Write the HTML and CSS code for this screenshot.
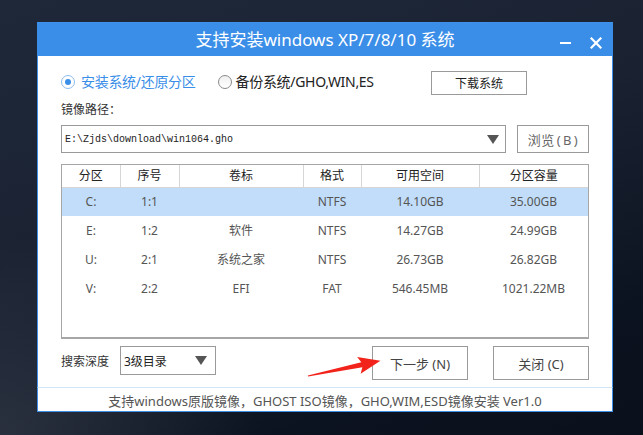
FILE: index.html
```html
<!DOCTYPE html>
<html lang="zh-CN">
<head>
<meta charset="utf-8">
<link rel="stylesheet" href="styles.css">
</head>
<body>
<div class="desktop">
  <div class="window">
    <div class="titlebar">
      <div class="title">支持安装windows XP/7/8/10 系统</div>
      <div class="controls">
        <span class="min"></span>
        <svg class="close" width="12" height="12" viewBox="0 0 12 12"><path d="M1.5 1.5 L10.5 10.5 M10.5 1.5 L1.5 10.5" stroke="#fff" stroke-width="2.2" stroke-linecap="square"/></svg>
      </div>
    </div>
    <div class="content">
      <div class="radio-row">
        <label class="radio checked"><span class="dot"></span><span class="rtext">安装系统/还原分区</span></label>
        <label class="radio"><span class="dot"></span><span class="rtext">备份系统/GHO,WIN,ES</span></label>
        <button class="btn dl">下载系统</button>
      </div>
      <div class="label">镜像路径：</div>
      <div class="path-row">
        <div class="path-input"><span class="path">E:\Zjds\download\win1064.gho</span><span class="tri"></span></div>
        <button class="btn browse">浏览 ( B )</button>
      </div>
      <div class="table-box">
        <table class="parts">
          <colgroup>
            <col class="c1"><col class="c2"><col class="c3"><col class="c4"><col class="c5"><col>
          </colgroup>
          <thead>
            <tr><th>分区</th><th>序号</th><th>卷标</th><th>格式</th><th>可用空间</th><th>分区容量</th></tr>
          </thead>
          <tbody>
            <tr class="sel"><td>C:</td><td>1:1</td><td></td><td>NTFS</td><td>14.10GB</td><td>35.00GB</td></tr>
            <tr><td>E:</td><td>1:2</td><td>软件</td><td>NTFS</td><td>14.27GB</td><td>24.99GB</td></tr>
            <tr><td>U:</td><td>2:1</td><td>系统之家</td><td>NTFS</td><td>26.73GB</td><td>26.82GB</td></tr>
            <tr><td>V:</td><td>2:2</td><td>EFI</td><td>FAT</td><td>546.45MB</td><td>1021.22MB</td></tr>
          </tbody>
        </table>
      </div>
      <div class="bottom-row">
        <span class="depth-label">搜索深度</span>
        <div class="select"><span>3级目录</span><span class="tri"></span></div>
        <button class="btn big next">下一步 (N)</button>
        <button class="btn big">关闭 (C)</button>
      </div>
    </div>
    <div class="footer">支持windows原版镜像，GHOST ISO镜像，GHO,WIM,ESD镜像安装 Ver1.0</div>
  </div>
  <svg class="arrow" width="643" height="435" viewBox="0 0 643 435">
    <polygon transform="translate(308 376) rotate(-11.8)" fill="#f2231a" points="0,-0.6 55,-2.6 52,-8.5 74,0 52,8.5 55,2.6 0,0.6"/>
  </svg>
</div>
</body>
</html>
```
FILE: styles.css
```css
* { box-sizing: border-box; }
html, body { margin: 0; padding: 0; }
body {
  width: 643px;
  height: 435px;
  overflow: hidden;
  font-family: "Noto Sans", "Noto Sans CJK SC", sans-serif;
}
.desktop {
  position: relative;
  width: 643px;
  height: 435px;
  padding: 22px 0 0 37px;
  background:
    radial-gradient(ellipse 260px 200px at 0% 100%, rgba(60,66,80,0.55), rgba(60,66,80,0) 100%),
    linear-gradient(160deg, #1f2839 0%, #1a2232 45%, #0c1320 80%, #0a101b 100%);
}
.window {
  width: 576px;
  height: 390px;
  display: flex;
  flex-direction: column;
  background: #fff;
}
.titlebar {
  height: 34px;
  background: #3a8ee8;
  position: relative;
  display: flex;
  align-items: center;
  justify-content: center;
  border-top: 1px solid #3f92ea;
}
.title {
  color: #fff;
  font-family: "Noto Sans", "Noto Sans CJK SC", sans-serif;
  font-size: 17px;
  line-height: 20px;
  margin-top: 1px;
}
.controls {
  position: absolute;
  right: 11px;
  top: 0;
  height: 34px;
  display: flex;
  align-items: center;
  gap: 19px;
}
.min {
  width: 11px;
  height: 2px;
  background: #fff;
  margin-top: 6px;
}
.close { display: block; margin-top: 5px; }
.content {
  flex: 1;
  border-left: 1px solid #3d8fe8;
  border-right: 1px solid #3d8fe8;
  padding: 14px 23px 0 23px;
  display: flex;
  flex-direction: column;
}
.radio-row {
  height: 24px;
  display: flex;
  align-items: center;
}
.radio {
  display: flex;
  align-items: center;
  font-size: 14px;
  line-height: 18px;
  color: #222;
}
.radio + .radio { margin-left: 22px; }
.radio .dot {
  width: 14px;
  height: 14px;
  border-radius: 50%;
  border: 1px solid #8a8a8a;
  background: linear-gradient(#f0f0f0, #fff);
  margin-right: 4px;
  position: relative;
}
.radio.checked .dot {
  border-color: #8dbdf1;
  background: #fff;
  margin-right: 6px;
}
.radio.checked .dot::after {
  content: "";
  position: absolute;
  left: 3px;
  top: 3px;
  width: 6px;
  height: 6px;
  border-radius: 50%;
  background: #3a8ee8;
}
.radio.checked .rtext { color: #3a8ee8; }
.rtext { letter-spacing: -0.3px; }
.btn {
  font-family: "Noto Sans", "Noto Sans CJK SC", sans-serif;
  background: #fff;
  border: 1px solid #9a9a9a;
  color: #333;
  padding: 0;
  margin: 0;
  font-size: 12px;
  display: flex;
  align-items: center;
  justify-content: center;
}
.dl {
  width: 96px;
  height: 24px;
  margin-left: auto;
  margin-right: 62px;
  margin-top: 2px;
  font-size: 12px;
  color: #222;
}
.label {
  margin-top: 8px;
  font-size: 12px;
  line-height: 16px;
  color: #333;
}
.path-row {
  margin-top: 7px;
  height: 28px;
  display: flex;
  gap: 11px;
}
.path-input {
  width: 445px;
  height: 28px;
  border: 1px solid #9a9a9a;
  display: flex;
  align-items: center;
  padding-left: 3px;
  padding-right: 6px;
}
.path {
  font-family: "Liberation Mono", monospace;
  font-size: 10px;
  color: #222;
  flex: 1;
  transform: scaleY(1.1);
}
.tri {
  width: 0;
  height: 0;
  border-left: 6px solid transparent;
  border-right: 6px solid transparent;
  border-top: 9px solid #555;
}
.browse {
  width: 72px;
  height: 28px;
  color: #666;
  font-size: 13px;
  letter-spacing: 0.5px;
  word-spacing: -2px;
}
.table-box {
  margin-top: 11px;
  width: 528px;
  height: 175px;
  border: 1px solid #a6a6a6;
  border-bottom: 2px solid #a6a6a6;
}
.parts {
  border-collapse: collapse;
  table-layout: fixed;
  width: 526px;
  font-size: 12px;
}
.c1 { width: 58px; }
.c2 { width: 59px; }
.c3 { width: 124px; }
.c4 { width: 58px; }
.c5 { width: 118px; }
.parts th {
  height: 22px;
  font-weight: normal;
  color: #222;
  border-right: 1px solid #d6d6d6;
  border-bottom: 1px solid #d6d6d6;
  padding: 0;
  line-height: 14px;
}
.parts th:last-child { border-right: none; }
.parts td {
  height: 29px;
  text-align: center;
  color: #555;
  padding: 0;
  line-height: 14px;
}
.parts tr.sel td { background: #c1ddf9; }
.bottom-row {
  margin-top: 7px;
  height: 34px;
  display: flex;
  align-items: flex-start;
}
.depth-label {
  width: 59px;
  font-size: 12px;
  line-height: 16px;
  margin-top: 8px;
  color: #333;
}
.select {
  width: 96px;
  height: 29px;
  border: 1px solid #9a9a9a;
  display: flex;
  align-items: center;
  justify-content: space-between;
  padding: 0 8px 0 3px;
  font-size: 12px;
  color: #222;
}
.btn.big {
  width: 96px;
  height: 34px;
  font-size: 13px;
  color: #444;
}
.next { margin-left: auto; margin-right: 25px; }
.footer {
  height: 25px;
  border: 1px solid #3d8fe8;
  border-top: 1px solid #d3e6f8;
  text-align: center;
  font-size: 13px;
  line-height: 16px;
  padding-top: 5px;
  color: #555;
}
.arrow {
  position: absolute;
  left: 0;
  top: 0;
  pointer-events: none;
}
```
